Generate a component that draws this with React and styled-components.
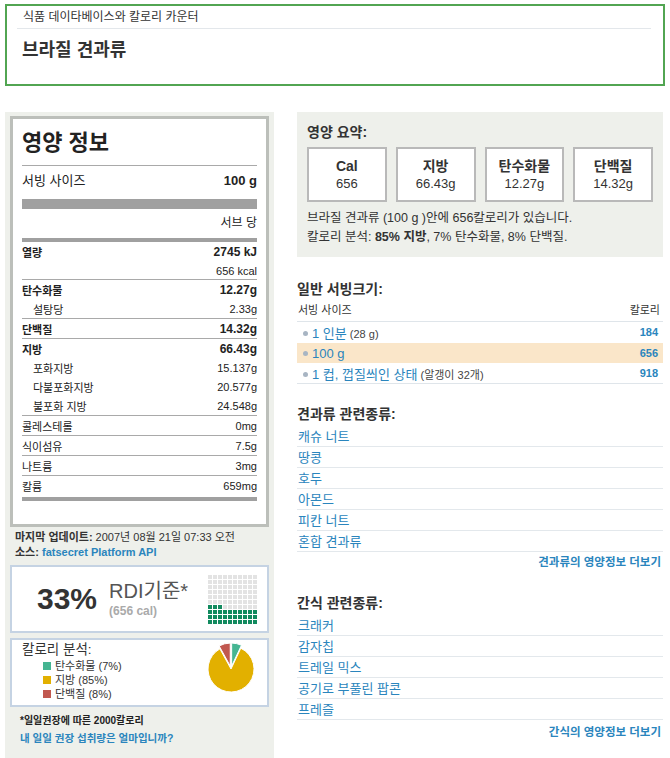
import React from "react";
import styled, { createGlobalStyle } from "styled-components";

const GlobalStyle = createGlobalStyle`
  * { box-sizing: border-box; }
  body {
    margin: 0;
    background: #ffffff;
    font-family: "Liberation Sans", "Noto Sans CJK KR", sans-serif;
    color: #333;
  }
  a { text-decoration: none; }
`;

const nutrition = [
  { label: "열량", value: "2745 kJ", bold: true, h: 20 },
  { label: "", value: "656 kcal", h: 17 },
  { label: "탄수화물", value: "12.27g", bold: true, line: true },
  { label: "설탕당", value: "2.33g", sub: true },
  { label: "단백질", value: "14.32g", bold: true, line: true },
  { label: "지방", value: "66.43g", bold: true, line: true },
  { label: "포화지방", value: "15.137g", sub: true },
  { label: "다불포화지방", value: "20.577g", sub: true },
  { label: "불포화 지방", value: "24.548g", sub: true },
  { label: "콜레스테롤", value: "0mg", line: true },
  { label: "식이섬유", value: "7.5g", line: true },
  { label: "나트륨", value: "3mg", line: true },
  { label: "칼륨", value: "659mg", line: true },
];

const stats = [
  { label: "Cal", value: "656" },
  { label: "지방", value: "66.43g" },
  { label: "탄수화물", value: "12.27g" },
  { label: "단백질", value: "14.32g" },
];

const servings = [
  { name: "1 인분", note: "(28 g)", cal: "184" },
  { name: "100 g", note: "", cal: "656", active: true },
  { name: "1 컵, 껍질씌인 상태", note: "(알갱이 32개)", cal: "918" },
];

const nuts = ["캐슈 너트", "땅콩", "호두", "아몬드", "피칸 너트", "혼합 견과류"];
const snacks = ["크래커", "감자칩", "트레일 믹스", "공기로 부풀린 팝콘", "프레즐"];

const legend = [
  { color: "#45b592", text: "탄수화물 (7%)" },
  { color: "#e2b000", text: "지방 (85%)" },
  { color: "#c1584f", text: "단백질 (8%)" },
];

function App() {
  return (
    <Page>
      <GlobalStyle />
      <Header>
        <TopText>식품 데이타베이스와 칼로리 카운터</TopText>
        <Title>브라질 견과류</Title>
      </Header>

      <Columns>
        <LeftPanel>
          <Label>
            <LabelTitle>영양 정보</LabelTitle>
            <ServingRow>
              <span>서빙 사이즈</span>
              <strong>100 g</strong>
            </ServingRow>
            <Bar $h={10} $mt={8} />
            <PerServe>서브 당</PerServe>
            <Bar $h={4} $mt={5} />
            {nutrition.map((n, i) => (
              <NRow key={i} $h={n.h} $line={n.line} $sub={n.sub}>
                <NLabel $bold={n.bold}>{n.label}</NLabel>
                <NValue $bold={n.bold}>{n.value}</NValue>
              </NRow>
            ))}
            <Bar $h={4} $mt={2} />
          </Label>

          <MetaBlock>
            <Meta>
              <b>마지막 업데이트:</b> 2007년 08월 21일 07:33 오전
            </Meta>
            <Meta>
              <b>소스:</b> <MetaLink href="#">fatsecret Platform API</MetaLink>
            </Meta>
          </MetaBlock>

          <RdiBox>
            <Percent>33%</Percent>
            <RdiText>
              <RdiLabel>RDI기준*</RdiLabel>
              <RdiCal>(656 cal)</RdiCal>
            </RdiText>
            <Grid>
              {Array.from({ length: 100 }).map((_, i) => {
                const r = Math.floor(i / 10);
                const c = i % 10;
                return <Cell key={i} $on={(9 - r) * 10 + c < 33} />;
              })}
            </Grid>
          </RdiBox>

          <BreakBox>
            <div>
              <BreakTitle>칼로리 분석:</BreakTitle>
              {legend.map((l) => (
                <LegendItem key={l.text}>
                  <Swatch $color={l.color} />
                  {l.text}
                </LegendItem>
              ))}
            </div>
            <Pie width="52" height="52" viewBox="0 0 52 52">
              <path d="M26 28 L35.79 7.19 A23 23 0 1 1 14.92 7.85 Z" fill="#e2b000" stroke="#fff" strokeWidth="1" />
              <path d="M26.65 25.07 L26.65 2.07 A23 23 0 0 1 36.44 4.26 Z" fill="#45b592" stroke="#fff" strokeWidth="1" />
              <path d="M25.25 25.09 L14.17 4.94 A23 23 0 0 1 25.25 2.09 Z" fill="#c1584f" stroke="#fff" strokeWidth="1" />
            </Pie>
          </BreakBox>

          <Footnote>*일일권장에 따른 2000칼로리</Footnote>
          <FootLink href="#">내 일일 권장 섭취량은 얼마입니까?</FootLink>
        </LeftPanel>

        <RightColumn>
          <Summary>
            <SectionTitle>영양 요약:</SectionTitle>
            <StatRow>
              {stats.map((s) => (
                <StatBox key={s.label}>
                  <StatLabel>{s.label}</StatLabel>
                  <StatValue>{s.value}</StatValue>
                </StatBox>
              ))}
            </StatRow>
            <SummaryLines>
              <SummaryText>브라질 견과류 (100 g )안에 656칼로리가 있습니다.</SummaryText>
              <SummaryText>
                칼로리 분석: <b>85% 지방</b>, 7% 탄수화물, 8% 단백질.
              </SummaryText>
            </SummaryLines>
          </Summary>

          <SectionTitle $mt={22}>일반 서빙크기:</SectionTitle>
          <TableHead>
            <span>서빙 사이즈</span>
            <span>칼로리</span>
          </TableHead>
          {servings.map((s, i) => (
            <ServingItem key={s.cal} $active={s.active} $last={i === servings.length - 1}>
              <span>
                <Bullet />
                <ServingLink href="#">{s.name}</ServingLink>
                {s.note && <Note> {s.note}</Note>}
              </span>
              <CalLink href="#">{s.cal}</CalLink>
            </ServingItem>
          ))}

          <SectionTitle $mt={20}>견과류 관련종류:</SectionTitle>
          <LinkList>
            {nuts.map((n) => (
              <LinkItem key={n}>
                <a href="#">{n}</a>
              </LinkItem>
            ))}
          </LinkList>
          <MoreLink href="#" $mt={1}>견과류의 영양정보 더보기</MoreLink>

          <SectionTitle $mt={22}>간식 관련종류:</SectionTitle>
          <LinkList>
            {snacks.map((n) => (
              <LinkItem key={n}>
                <a href="#">{n}</a>
              </LinkItem>
            ))}
          </LinkList>
          <MoreLink href="#" $mt={3}>간식의 영양정보 더보기</MoreLink>
        </RightColumn>
      </Columns>
    </Page>
  );
}
export default App;

const Page = styled.div`
  width: 670px;
  padding: 4px 5px 0 5px;
`;

const Header = styled.div`
  width: 660px;
  height: 82px;
  border: 2px solid #52a552;
  padding: 0 12px 0 10px;
`;

const TopText = styled.div`
  font-size: 12px;
  line-height: 22px;
  padding-left: 6px;
  color: #333;
  border-bottom: 1px solid #e3e7eb;
`;

const Title = styled.h1`
  margin: 9px 0 0 0;
  padding-left: 5px;
  font-size: 18px;
  line-height: 24px;
  font-weight: bold;
  color: #333;
`;

const Columns = styled.div`
  display: flex;
  gap: 23px;
  margin-top: 26px;
  align-items: flex-start;
`;

const LeftPanel = styled.div`
  width: 269px;
  min-height: 646px;
  background: #eef0eb;
  padding: 4px 5px 12px 5px;
`;

const Label = styled.div`
  background: #fff;
  border: 3px solid #bcbfba;
  padding: 0 9px 23px 9px;
  color: #222;
`;

const LabelTitle = styled.div`
  padding-top: 9px;
  padding-bottom: 7px;
  font-size: 22px;
  line-height: 30px;
  font-weight: bold;
  color: #222;
  border-bottom: 1px solid #a9a9a9;
`;

const ServingRow = styled.div`
  display: flex;
  justify-content: space-between;
  margin-top: 5px;
  font-size: 13px;
  line-height: 20px;

  strong {
    font-size: 13px;
  }
`;

const Bar = styled.div`
  height: ${(p) => p.$h}px;
  margin-top: ${(p) => p.$mt}px;
  background: #a0a0a0;
`;

const PerServe = styled.div`
  margin-top: 4px;
  text-align: right;
  font-size: 12px;
  line-height: 20px;
`;

const NRow = styled.div`
  display: flex;
  justify-content: space-between;
  align-items: center;
  height: ${(p) => p.$h || (p.$line ? 20 : 19)}px;
  padding-left: ${(p) => (p.$sub ? 11 : 0)}px;
  border-top: ${(p) => (p.$line ? "1px solid #a9a9a9" : "none")};
`;

const NLabel = styled.span`
  font-size: 11px;
  font-weight: ${(p) => (p.$bold ? "bold" : "normal")};
`;

const NValue = styled.span`
  font-size: ${(p) => (p.$bold ? 12 : 11)}px;
  font-weight: ${(p) => (p.$bold ? "bold" : "normal")};
`;

const MetaBlock = styled.div`
  margin-top: 3px;
  padding-left: 5px;
`;

const Meta = styled.div`
  font-size: 11px;
  line-height: 15px;
  color: #333;
`;

const MetaLink = styled.a`
  color: #2a85bd;
  font-weight: bold;
`;

const RdiBox = styled.div`
  display: flex;
  align-items: center;
  height: 68px;
  margin-top: 5px;
  background: #fff;
  border: 2px solid #c5d3e3;
  padding: 0 10px 0 25px;
`;

const Percent = styled.div`
  font-size: 30px;
  font-weight: bold;
  color: #333;
  line-height: 36px;
`;

const RdiText = styled.div`
  margin-left: 12px;
  display: flex;
  flex-direction: column;
`;

const RdiLabel = styled.span`
  font-size: 20px;
  line-height: 24px;
  color: #555;
`;

const RdiCal = styled.span`
  font-size: 12px;
  line-height: 16px;
  font-weight: bold;
  color: #aaa;
`;

const Grid = styled.div`
  margin-left: auto;
  display: grid;
  grid-template-columns: repeat(10, 4px);
  grid-auto-rows: 4px;
  gap: 1px;
`;

const Cell = styled.div`
  background: ${(p) => (p.$on ? "#118a5e" : "#e3e3e3")};
`;

const BreakBox = styled.div`
  display: flex;
  justify-content: space-between;
  align-items: flex-start;
  height: 69px;
  margin-top: 5px;
  background: #fff;
  border: 2px solid #c5d3e3;
  padding: 1px 10px 0 10px;
`;

const BreakTitle = styled.div`
  font-size: 13.5px;
  line-height: 18px;
  color: #333;
`;

const LegendItem = styled.div`
  display: flex;
  align-items: center;
  padding-left: 21px;
  font-size: 11px;
  line-height: 14px;
  color: #333;
`;

const Swatch = styled.span`
  width: 8px;
  height: 8px;
  margin-right: 4px;
  background: ${(p) => p.$color};
`;

const Pie = styled.svg`
  display: block;
`;

const Footnote = styled.div`
  margin-top: 6px;
  padding-left: 10px;
  font-size: 10px;
  line-height: 16px;
  font-weight: bold;
  color: #222;
`;

const FootLink = styled.a`
  display: block;
  padding-left: 10px;
  font-size: 10.5px;
  line-height: 18px;
  font-weight: bold;
  color: #2a85bd;
`;

const RightColumn = styled.div`
  width: 366px;
`;

const Summary = styled.div`
  background: #eef0eb;
  padding: 10px 10px 10px 10px;
`;

const SectionTitle = styled.div`
  margin-top: ${(p) => p.$mt || 0}px;
  font-size: 14px;
  line-height: 20px;
  font-weight: bold;
  color: #333;
`;

const StatRow = styled.div`
  display: flex;
  gap: 9px;
  margin-top: 5px;
`;

const StatBox = styled.div`
  width: 80px;
  height: 55px;
  background: #fff;
  border: 2px solid #b9b9b9;
  padding-top: 9px;
  text-align: center;
`;

const StatLabel = styled.div`
  font-size: 14px;
  line-height: 17px;
  font-weight: bold;
  color: #333;
`;

const StatValue = styled.div`
  font-size: 13px;
  line-height: 17px;
  color: #333;
`;

const SummaryLines = styled.div`
  margin-top: 7px;
`;

const SummaryText = styled.div`
  font-size: 12.5px;
  line-height: 19px;
  color: #333;
`;

const TableHead = styled.div`
  display: flex;
  justify-content: space-between;
  height: 23px;
  line-height: 22px;
  font-size: 11px;
  color: #333;
  border-bottom: 1px solid #dfe5ea;
  padding: 0 3px 0 1px;
`;

const ServingItem = styled.div`
  display: flex;
  justify-content: space-between;
  align-items: center;
  height: ${(p) => (p.$last ? 21 : 20.5)}px;
  background: ${(p) => (p.$active ? "#fae6c9" : "transparent")};
  border-bottom: ${(p) => (p.$last ? "1px solid #dfe5ea" : "none")};
  padding: 0 5px 0 6px;
`;

const Bullet = styled.span`
  display: inline-block;
  width: 5px;
  height: 5px;
  border-radius: 50%;
  background: #a8b5c3;
  margin-right: 4px;
  vertical-align: middle;
`;

const ServingLink = styled.a`
  font-size: 13px;
  color: #2a85bd;
`;

const Note = styled.span`
  font-size: 11px;
  color: #444;
`;

const CalLink = styled.a`
  font-size: 11px;
  font-weight: bold;
  color: #2a85bd;
`;

const LinkList = styled.div`
  margin-top: 2px;
`;

const LinkItem = styled.div`
  height: 21px;
  line-height: 20px;
  border-bottom: 1px solid #e3e8ec;
  padding-left: 1px;

  a {
    font-size: 13px;
    color: #2a85bd;
  }
`;

const MoreLink = styled.a`
  display: block;
  margin-top: ${(p) => p.$mt || 0}px;
  text-align: right;
  padding-right: 2px;
  font-size: 11.5px;
  line-height: 18px;
  font-weight: bold;
  color: #2a85bd;
`;
